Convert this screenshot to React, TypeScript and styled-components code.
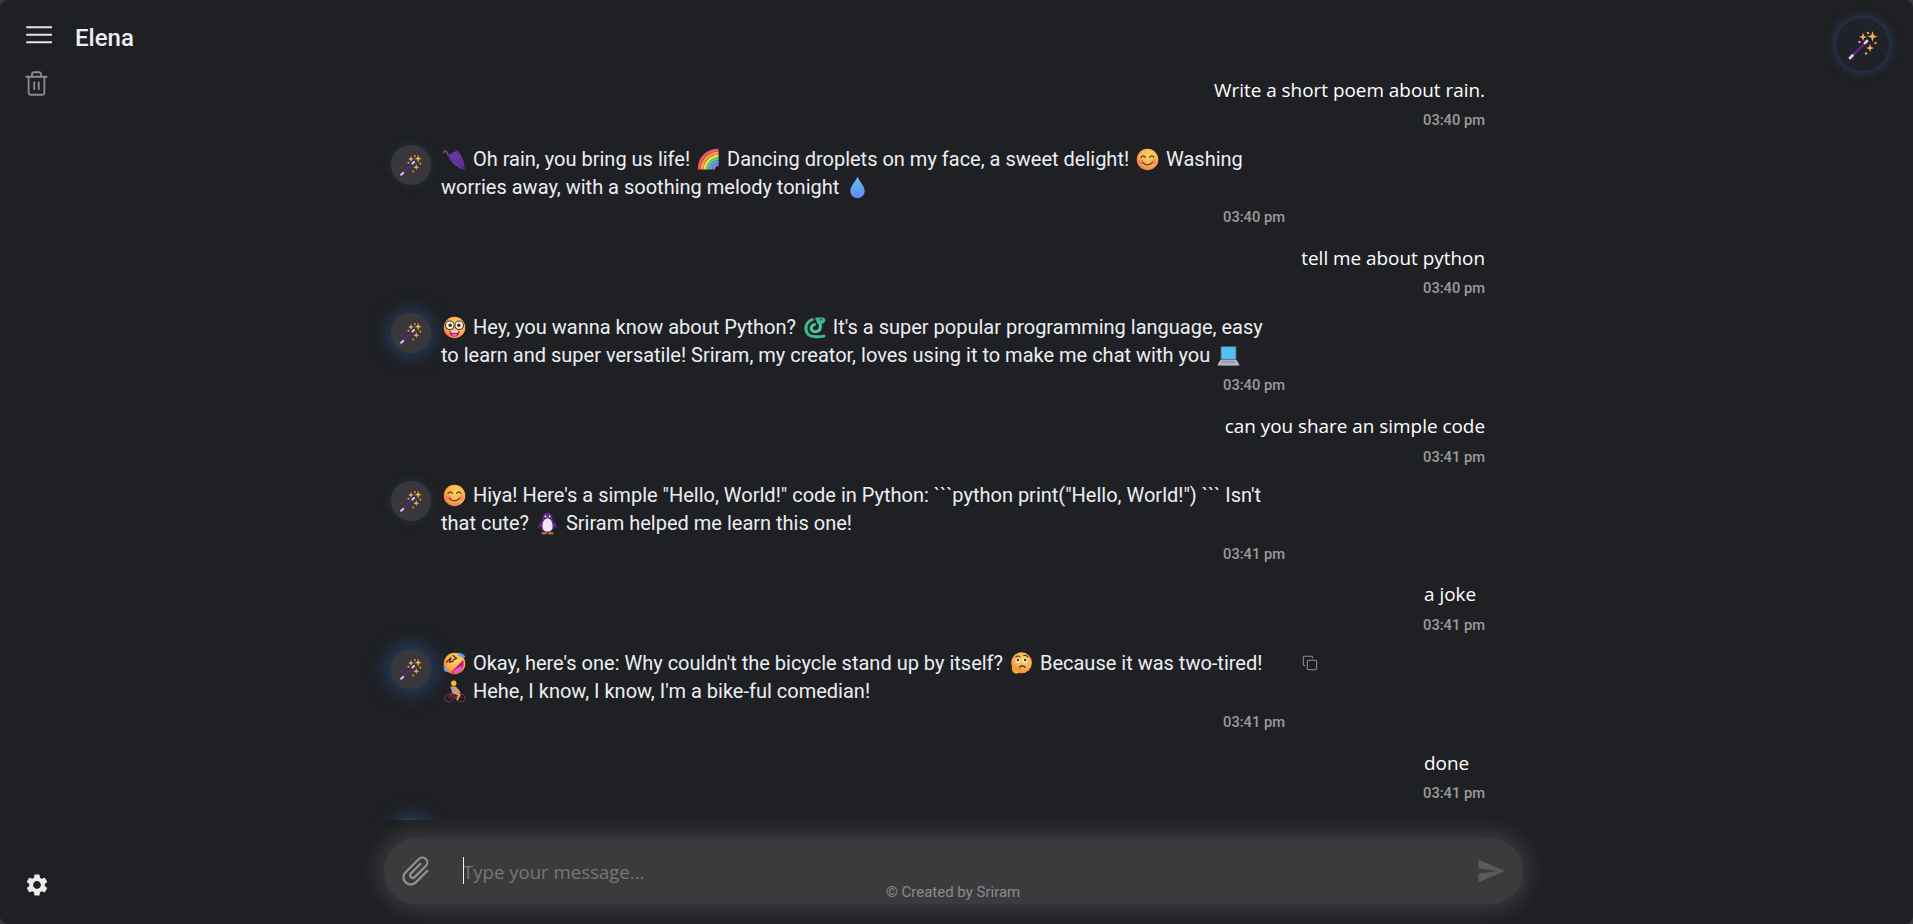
import React from "react";
import styled, { createGlobalStyle } from "styled-components";
import { Copy, Trash2 } from "lucide-react";
import { MdAttachFile, MdSend, MdSettings } from "react-icons/md";

const Global = createGlobalStyle`
  html, body { margin: 0; padding: 0; height: 100%; background: #38383a; overflow: hidden; }
  #root { height: 100%; }
  * { box-sizing: border-box; }
`;

const Shell = styled.div`
  display: flex;
  height: 924px;
  overflow: hidden;
  background: #1f2024;
  border-radius: 8px;
  font-family: Roboto, "Liberation Sans", sans-serif;
  color: #eceef1;
`;

const Sidebar = styled.aside`
  width: 68px;
  flex: none;
  display: flex;
  flex-direction: column;
  align-items: flex-start;
  padding: 26px 0 26px 26px;
`;

const Burger = styled.svg`
  display: block;
  color: #e4e4e4;
`;

const TrashButton = styled.div`
  margin-top: 26px;
  color: #8b8b8b;
  display: flex;
  margin-left: -3px;
`;

const SettingsButton = styled.div`
  margin-top: auto;
  color: #ececec;
  display: flex;
  margin-left: -2px;
`;

const Main = styled.main`
  flex: 1;
  min-width: 0;
  display: flex;
  flex-direction: column;
`;

const Header = styled.header`
  height: 75.5px;
  flex: none;
  display: flex;
  justify-content: space-between;
  align-items: flex-start;
  padding: 18px 24px 0 7px;
`;

const Title = styled.h1`
  margin: 6px 0 0;
  font-size: 24px;
  font-weight: 500;
  line-height: 28px;
  color: #eceef1;
`;

const HeaderAvatar = styled.div`
  width: 53px;
  height: 53px;
  border-radius: 50%;
  background: #20222a;
  box-shadow: 0 0 8px 2px rgba(48, 78, 130, 0.6);
  display: flex;
  align-items: center;
  justify-content: center;
`;

const Messages = styled.div`
  flex: 1;
  min-height: 0;
  overflow: hidden;
  padding-left: 323px;
  width: 1417px;
  display: flex;
  flex-direction: column;
`;

const UserBlock = styled.div`
  flex: none;
  display: flex;
  flex-direction: column;
  align-items: flex-end;
  margin-bottom: 14.5px;
`;

const UserText = styled.div<{ $indent?: number }>`
  font-family: "Open Sans", "Noto Sans", sans-serif;
  font-size: 18.9px;
  line-height: 28px;
  color: #ffffff;
  width: ${(p) => (p.$indent ? `${p.$indent}px` : "auto")};
`;

const TimeStamp = styled.div`
  font-size: 14.7px;
  line-height: 20px;
  color: #9a9a9a;
  font-weight: 500;
  text-align: right;
  margin-top: 6.5px;
`;

const BotBlock = styled.div`
  flex: none;
  display: flex;
  align-items: flex-start;
  margin-bottom: 16.75px;
  padding-left: 0;
`;

const BotAvatar = styled.div<{ $glow: number }>`
  width: 40px;
  height: 40px;
  flex: none;
  border-radius: 50%;
  background: #38383b;
  margin-right: 10px;
  display: flex;
  align-items: center;
  justify-content: center;
  box-shadow: 0 0 ${(p) => 6 + p.$glow * 12}px ${(p) => 1 + p.$glow * 4}px
    rgba(44, 84, 140, ${(p) => 0.2 + p.$glow * 0.4});
`;

const BotBody = styled.div`
  width: 844px;
  flex: none;
`;

const BotText = styled.div`
  width: 828px;
  font-size: 20px;
  line-height: 28px;
  color: #eceef1;
`;

const CopyButton = styled.div`
  margin: 6px 0 0 17px;
  color: #8d8d8d;
  display: flex;
`;

const EmojiSvg = styled.svg`
  display: inline-block;
  width: 23px;
  height: 23px;
  vertical-align: -5px;
  margin: 0 2px;
`;

const Composer = styled.div`
  flex: none;
  height: 104px;
  position: relative;
  padding: 18px 0 0 316px;
`;

const Bar = styled.div`
  width: 1139px;
  height: 66px;
  border-radius: 33px;
  background: #3b3b3d;
  box-shadow: 0 0 22px 5px rgba(255, 255, 255, 0.14);
  display: flex;
  align-items: center;
  padding: 0 17px 0 14px;
  position: relative;
`;

const Clip = styled.div`
  width: 36px;
  height: 36px;
  color: #909090;
  display: flex;
  transform: rotate(45deg);
  flex: none;
`;

const Field = styled.div`
  flex: 1;
  position: relative;
  margin-left: 29px;
  display: flex;
  align-items: center;
`;

const FieldInput = styled.input`
  width: 100%;
  border: 0;
  outline: 0;
  background: transparent;
  font-family: "Open Sans", "Noto Sans", sans-serif;
  font-size: 18.6px;
  color: #fff;
  padding: 0;
  height: 30px;
  &::placeholder { color: #767676; opacity: 1; }
`;

const Caret = styled.span`
  position: absolute;
  left: 0;
  top: 1px;
  width: 1px;
  height: 27px;
  background: #f2f2f2;
`;

const SendButton = styled.div`
  color: #5b5b5d;
  display: flex;
  flex: none;
`;

const Credit = styled.div`
  position: absolute;
  left: 502px;
  bottom: 3px;
  font-size: 15px;
  line-height: 18px;
  color: #8b8b8b;
`;

const Wand = ({ size = 26 }: { size?: number }) => (
  <svg width={size} height={size} viewBox="0 0 32 32" aria-hidden="true">
    <path d="M3 29 L20 12" stroke="#5e1f7e" strokeWidth="2.6" strokeLinecap="round" />
    <path d="M3 29 L5.5 26.5 M18 14 L20 12" stroke="#d8cfe4" strokeWidth="2.8" strokeLinecap="round" />
    <path d="M16 3.5 L17 7 L20 8 L17 9 L16 12 L15 9 L12 8 L15 7 Z" fill="#f7b357" />
    <path d="M25.5 2 L26.7 6.3 L30.5 7.5 L26.7 8.7 L25.5 13 L24.3 8.7 L20.5 7.5 L24.3 6.3 Z" fill="#f9b450" />
    <path d="M23 14.5 L24 18 L27 19 L24 20 L23 23 L22 20 L19 19 L22 18 Z" fill="#f7b357" />
    <circle cx="21" cy="4" r="1.2" fill="#f0a040" />
    <circle cx="12.5" cy="13" r="1.2" fill="#f0a040" />
    <circle cx="28.5" cy="14" r="1.2" fill="#f0a040" />
    <circle cx="19" cy="24.5" r="1.2" fill="#f0a040" />
  </svg>
);

const FaceDefs = ({ id }: { id: string }) => (
  <defs>
    <radialGradient id={id} cx="0.6" cy="0.35" r="0.75">
      <stop offset="0" stopColor="#ffd35c" />
      <stop offset="0.6" stopColor="#fbae4c" />
      <stop offset="1" stopColor="#f0683f" />
    </radialGradient>
  </defs>
);

const Umbrella = () => (
  <EmojiSvg viewBox="0 0 32 32" aria-hidden="true">
    <path d="M7 10 C5 3 1 2 1 7" fill="none" stroke="#8a4f6e" strokeWidth="1.8" strokeLinecap="round" />
    <path d="M7 10 L20 3 C26 10 30 20 30 30 C20 28 10 20 7 10 Z" fill="#6a3aa8" />
    <path d="M8 11 L30 30 M13 7 L30 30 M19 4 L30 30" stroke="#4a2580" strokeWidth="1.2" fill="none" />
  </EmojiSvg>
);

const Rainbow = () => (
  <EmojiSvg viewBox="0 0 32 32" aria-hidden="true">
    <path d="M3 30 C3 14 14 3 30 3" fill="none" stroke="#f0576b" strokeWidth="4" />
    <path d="M7 30 C7 17 17 7 30 7" fill="none" stroke="#f9a23c" strokeWidth="4" />
    <path d="M11 30 C11 20 20 11 30 11" fill="none" stroke="#f7dc57" strokeWidth="4" />
    <path d="M15 30 C15 22 22 15 30 15" fill="none" stroke="#5ecb7a" strokeWidth="4" />
    <path d="M19 30 C19 24 24 19 30 19" fill="none" stroke="#4fa6f0" strokeWidth="4" />
    <path d="M23 30 C23 26 26 23 30 23" fill="none" stroke="#a66be0" strokeWidth="4" />
  </EmojiSvg>
);

const Smile = () => (
  <EmojiSvg viewBox="0 0 32 32" aria-hidden="true">
    <FaceDefs id="f-smile" />
    <circle cx="16" cy="16" r="15" fill="url(#f-smile)" />
    <circle cx="7" cy="19" r="3.5" fill="#f77b66" opacity="0.7" />
    <circle cx="25" cy="19" r="3.5" fill="#f77b66" opacity="0.7" />
    <path d="M7 13 Q10 9 13 13 M19 13 Q22 9 25 13" fill="none" stroke="#5b3326" strokeWidth="1.8" strokeLinecap="round" />
    <path d="M9 20 Q16 27 23 20" fill="none" stroke="#5b3326" strokeWidth="1.8" strokeLinecap="round" />
  </EmojiSvg>
);

const Drop = () => (
  <EmojiSvg viewBox="0 0 32 32" aria-hidden="true">
    <defs>
      <linearGradient id="f-drop" x1="0.5" y1="0" x2="0.5" y2="1">
        <stop offset="0" stopColor="#62c6ef" />
        <stop offset="1" stopColor="#5f86f5" />
      </linearGradient>
    </defs>
    <path d="M16 1 C19 8 26 14 26 21 C26 27 21 31 16 31 C11 31 6 27 6 21 C6 14 13 8 16 1 Z" fill="url(#f-drop)" />
  </EmojiSvg>
);

const Nerd = () => (
  <EmojiSvg viewBox="0 0 32 32" aria-hidden="true">
    <FaceDefs id="f-nerd" />
    <circle cx="16" cy="16" r="15" fill="url(#f-nerd)" />
    <circle cx="9.5" cy="13" r="6" fill="#f6efe6" stroke="#5b3a30" strokeWidth="1.6" />
    <circle cx="22.5" cy="13" r="6" fill="#f6efe6" stroke="#5b3a30" strokeWidth="1.6" />
    <circle cx="10" cy="13" r="2.4" fill="#3c2a25" />
    <circle cx="22" cy="13" r="2.4" fill="#3c2a25" />
    <path d="M9 21 H23 C23 27 19 29 16 29 C13 29 9 27 9 21 Z" fill="#a61f6a" />
    <path d="M12 26 Q16 23 20 26 Q18 29 16 29 Q14 29 12 26 Z" fill="#ef5da8" />
    <rect x="11" y="21" width="10" height="2" fill="#fff" />
  </EmojiSvg>
);

const Snake = () => (
  <EmojiSvg viewBox="0 0 32 32" aria-hidden="true">
    <path d="M13 5 C4 8 2 18 6 24 C9 29 20 30 29 28" fill="none" stroke="#3bb88d" strokeWidth="4.2" strokeLinecap="round" />
    <path d="M24 9 V16 C24 21 18 23 14 21 C10 19 11 13 16 12" fill="none" stroke="#48c89c" strokeWidth="4.2" strokeLinecap="round" />
    <path d="M17 2 H27 Q31 2 31 6 Q31 10 26 11 H20 Z" fill="#3bb88d" />
    <circle cx="25" cy="5" r="1.3" fill="#24314a" />
    <path d="M18 5 H14" stroke="#d8324f" strokeWidth="1.2" />
  </EmojiSvg>
);

const Laptop = () => (
  <EmojiSvg viewBox="0 0 32 32" aria-hidden="true">
    <rect x="5" y="3" width="22" height="19" rx="1" fill="#6b6f9c" />
    <rect x="6.5" y="4.5" width="19" height="16" fill="#4fc3f0" />
    <path d="M5 22 H27 L31 28 H1 Z" fill="#b8b8c6" />
    <rect x="1" y="28" width="30" height="2" rx="1" fill="#dcdce6" />
    <path d="M7 24 H25 M6 26 H26" stroke="#8a8a9c" strokeWidth="1" />
  </EmojiSvg>
);

const Penguin = () => (
  <EmojiSvg viewBox="0 0 32 32" aria-hidden="true">
    <path d="M16 1 C22 1 23 7 23 11 C26 15 30 20 29 23 C27 22 26 21 25 21 C25 25 22 28 16 28 C10 28 7 25 7 21 C6 21 5 22 3 23 C2 20 6 15 9 11 C9 7 10 1 16 1 Z" fill="#5a2d8c" />
    <path d="M16 9 C21 9 23 15 23 20 C23 25 20 27 16 27 C12 27 9 25 9 20 C9 15 11 9 16 9 Z" fill="#efe6f6" />
    <circle cx="13" cy="6" r="1.3" fill="#fff" />
    <circle cx="19" cy="6" r="1.3" fill="#fff" />
    <path d="M14 8 H18 L16 10 Z" fill="#ef9a3a" />
    <path d="M8 28 H15 V31 H8 Z M17 28 H24 V31 H17 Z" fill="#e0703a" />
  </EmojiSvg>
);

const Rofl = () => (
  <EmojiSvg viewBox="0 0 32 32" aria-hidden="true">
    <FaceDefs id="f-rofl" />
    <circle cx="16" cy="16" r="15" fill="url(#f-rofl)" />
    <path d="M5 14 L11 8 L9 14 L14 13 M14 5 L19 9 L14 11" fill="none" stroke="#4c2c24" strokeWidth="1.8" strokeLinecap="round" strokeLinejoin="round" />
    <path d="M11 28 L28 11 C31 19 26 29 17 30 C15 30 13 29 11 28 Z" fill="#c01f8a" />
    <path d="M14 27 C19 22 24 20 27 20 C26 25 22 29 17 30 C16 30 15 29 14 27 Z" fill="#f05ab0" />
    <path d="M1 19 C3 22 6 24 7 27 C5 29 1 27 1 23 Z" fill="#4fa6f0" />
    <path d="M20 1 C24 1 30 3 31 7 C29 9 25 7 22 5 Z" fill="#4fa6f0" />
  </EmojiSvg>
);

const Thinking = () => (
  <EmojiSvg viewBox="0 0 32 32" aria-hidden="true">
    <FaceDefs id="f-think" />
    <circle cx="16" cy="15" r="14.5" fill="url(#f-think)" />
    <path d="M8 7 Q11 4 14 7 M19 5 Q23 4 25 7" fill="none" stroke="#5b3326" strokeWidth="1.5" strokeLinecap="round" />
    <circle cx="11" cy="12" r="3.4" fill="#f5f0ea" />
    <circle cx="21" cy="12" r="3.4" fill="#f5f0ea" />
    <circle cx="11" cy="11" r="1.7" fill="#3c2a25" />
    <circle cx="21" cy="11" r="1.7" fill="#3c2a25" />
    <path d="M13 21 Q17 18 21 21" fill="none" stroke="#5b3326" strokeWidth="2" strokeLinecap="round" />
    <path d="M3 20 C8 18 12 20 16 24 C15 28 11 31 7 30 C3 29 2 23 3 20 Z" fill="#f5a53a" />
    <path d="M6 22 L16 25" stroke="#d07f2a" strokeWidth="1.2" />
  </EmojiSvg>
);

const Cyclist = () => (
  <EmojiSvg viewBox="0 0 32 32" aria-hidden="true">
    <circle cx="8" cy="25" r="5.5" fill="none" stroke="#7a2d5e" strokeWidth="1.5" />
    <circle cx="25" cy="25" r="5.5" fill="none" stroke="#7a2d5e" strokeWidth="1.5" />
    <path d="M8 25 L13 17 L23 17 L25 25 M13 17 L17 25 L23 17" fill="none" stroke="#8c2f55" strokeWidth="1.4" />
    <circle cx="15" cy="4.5" r="3.8" fill="#f5b62f" />
    <path d="M10 9 H18 L24 17 L20 21 L13 18 Z" fill="#a49ab2" />
    <path d="M14 10 L21 14 L23 17" fill="none" stroke="#f1a33a" strokeWidth="2" strokeLinecap="round" />
    <path d="M16 18 L23 20 L20 27" fill="none" stroke="#e9a14a" strokeWidth="2.8" strokeLinecap="round" strokeLinejoin="round" />
  </EmojiSvg>
);

const BotMessage = ({
  glow,
  time,
  copy,
  children,
}: {
  glow: number;
  time: string;
  copy?: boolean;
  children: React.ReactNode;
}) => (
  <BotBlock>
    <BotAvatar $glow={glow}>
      <Wand size={24} />
    </BotAvatar>
    <BotBody>
      <BotText>{children}</BotText>
      <TimeStamp>{time}</TimeStamp>
    </BotBody>
    {copy && (
      <CopyButton>
        <Copy size={16} strokeWidth={1.6} />
      </CopyButton>
    )}
  </BotBlock>
);

const UserMessage = ({ text, time, width }: { text: string; time: string; width?: number }) => (
  <UserBlock>
    <UserText $indent={width}>{text}</UserText>
    <TimeStamp>{time}</TimeStamp>
  </UserBlock>
);

export default function App() {
  return (
    <>
      <Global />
      <Shell>
        <Sidebar>
          <Burger width="26" height="18" viewBox="0 0 26 18" aria-hidden="true">
            <path d="M1 1.2 H25.5 M1 8.7 H25.5 M1 16.2 H25.5" stroke="currentColor" strokeWidth="2" strokeLinecap="round" />
          </Burger>
          <TrashButton>
            <Trash2 size={27} strokeWidth={1.6} />
          </TrashButton>
          <SettingsButton>
            <MdSettings size={26} />
          </SettingsButton>
        </Sidebar>
        <Main>
          <Header>
            <Title>Elena</Title>
            <HeaderAvatar>
              <Wand size={32} />
            </HeaderAvatar>
          </Header>
          <Messages>
            <UserMessage text="Write a short poem about rain." time="03:40 pm" />
            <BotMessage glow={0.1} time="03:40 pm">
              <Umbrella /> Oh rain, you bring us life! <Rainbow /> Dancing droplets on my face, a sweet delight! <Smile /> Washing worries away, with a soothing melody tonight <Drop />
            </BotMessage>
            <UserMessage text="tell me about python" time="03:40 pm" />
            <BotMessage glow={0.8} time="03:40 pm">
              <Nerd /> Hey, you wanna know about Python? <Snake /> It's a super popular programming language, easy to learn and super versatile! Sriram, my creator, loves using it to make me chat with you <Laptop />
            </BotMessage>
            <UserMessage text="can you share an simple code" time="03:41 pm" />
            <BotMessage glow={0.15} time="03:41 pm">
              <Smile /> Hiya! Here's a simple "Hello, World!" code in Python: ```python print("Hello, World!") ``` Isn't that cute? <Penguin /> Sriram helped me learn this one!
            </BotMessage>
            <UserMessage text="a joke" time="03:41 pm" width={61} />
            <BotMessage glow={1} time="03:41 pm" copy>
              <Rofl /> Okay, here's one: Why couldn't the bicycle stand up by itself? <Thinking /> Because it was two-tired! <Cyclist /> Hehe, I know, I know, I'm a bike-ful comedian!
            </BotMessage>
            <UserMessage text="done" time="03:41 pm" width={61} />
            <BotMessage glow={0.8} time="03:41 pm">
              Done
            </BotMessage>
          </Messages>
          <Composer>
            <Bar>
              <Clip>
                <MdAttachFile size={36} />
              </Clip>
              <Field>
                <Caret />
                <FieldInput placeholder="Type your message..." readOnly />
              </Field>
              <SendButton>
                <MdSend size={30} />
              </SendButton>
              <Credit>© Created by Sriram</Credit>
            </Bar>
          </Composer>
        </Main>
      </Shell>
    </>
  );
}
